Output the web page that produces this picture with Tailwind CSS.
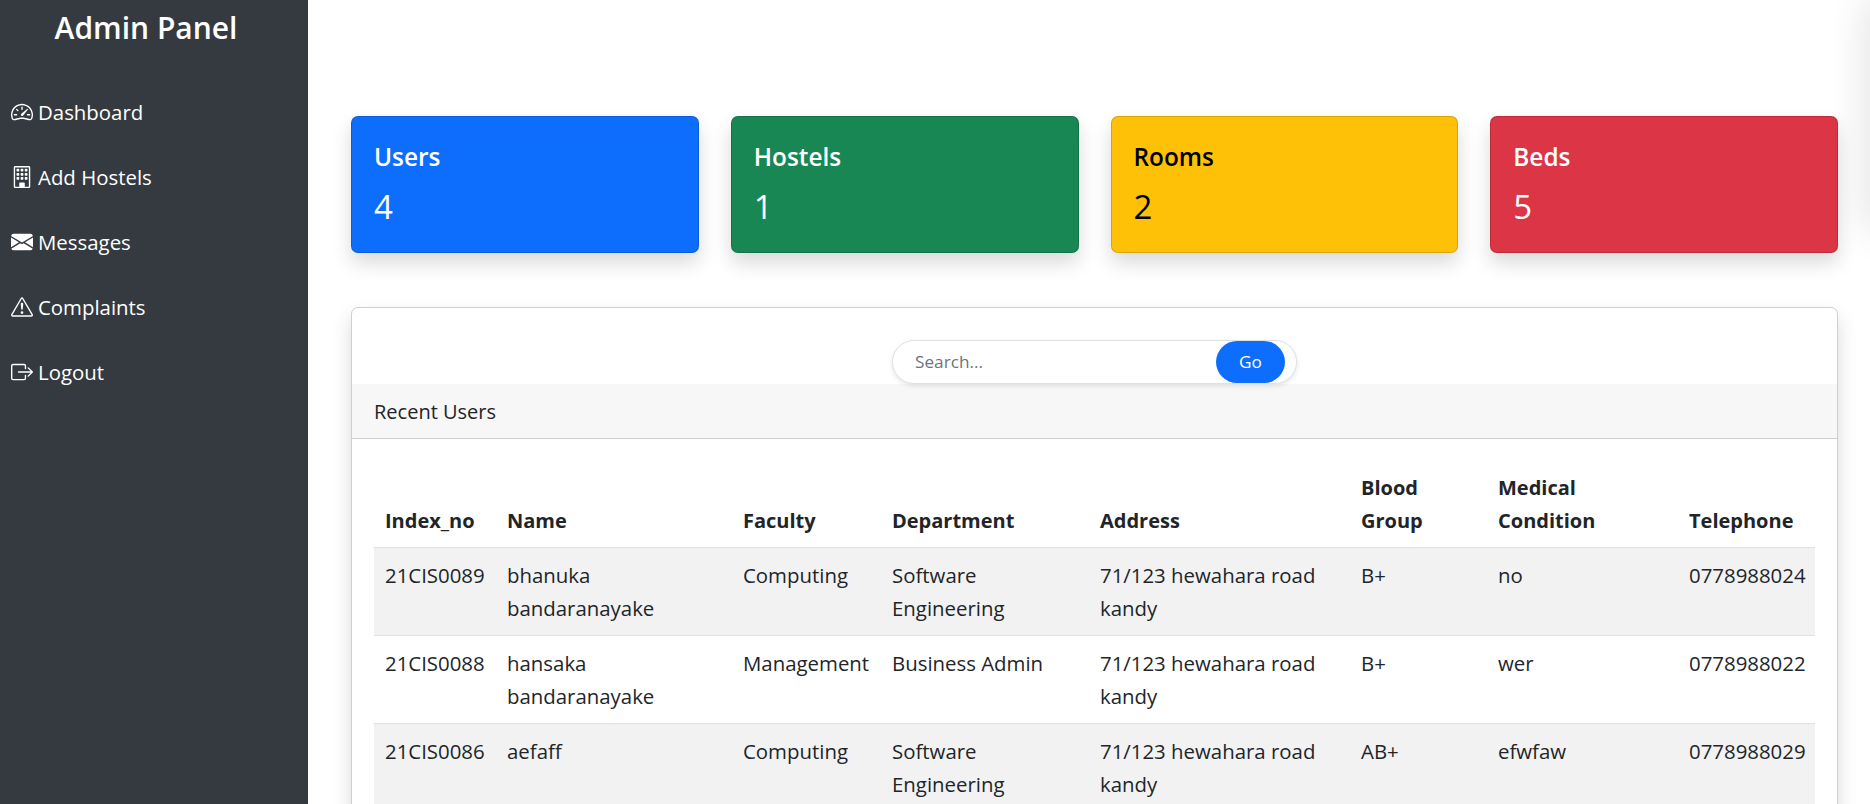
<!DOCTYPE html>
<html lang="en">
<head>
    <meta charset="UTF-8">
    <title>Admin Panel</title>
    <script src="https://cdn.jsdelivr.net/npm/@tailwindcss/browser@4"></script>
</head>
<body class="bg-white h-screen overflow-hidden flex font-['Open_Sans',sans-serif] text-[#212529] text-[20.4px] leading-[32.5px]">
    <!-- sidebar -->
    <aside class="w-[308px] h-full shrink-0 bg-[#343a40] text-white">
        <h3 class="text-center text-[30px] leading-[38px] font-semibold pt-[9px] pr-[16px] mb-[49px]">Admin Panel</h3>
        <ul class="flex flex-col gap-[33px] pl-[11px] text-[20.4px] leading-[32px]">
            <li class="flex items-center gap-[5px]">
                <svg class="w-[22px] h-[22px] shrink-0" viewBox="0 0 16 16" fill="currentColor"><path d="M8 4a.5.5 0 0 1 .5.5V6a.5.5 0 0 1-1 0V4.5A.5.5 0 0 1 8 4M3.732 5.732a.5.5 0 0 1 .707 0l.915.914a.5.5 0 1 1-.708.708l-.914-.915a.5.5 0 0 1 0-.707M2 10a.5.5 0 0 1 .5-.5h1.586a.5.5 0 0 1 0 1H2.5A.5.5 0 0 1 2 10m9.5 0a.5.5 0 0 1 .5-.5h1.5a.5.5 0 0 1 0 1H12a.5.5 0 0 1-.5-.5m.754-4.246a.39.39 0 0 0-.527-.02L7.547 9.31a.91.91 0 1 0 1.302 1.258l3.434-4.297a.39.39 0 0 0-.029-.518z"/><path fill-rule="evenodd" d="M0 10a8 8 0 1 1 15.547 2.661c-.442 1.253-1.845 1.602-2.932 1.25C11.309 13.488 9.475 13 8 13c-1.474 0-3.31.488-4.615.911-1.087.352-2.49.003-2.932-1.25A8 8 0 0 1 0 10m8-7a7 7 0 0 0-6.603 9.329c.203.575.923.876 1.68.63C4.397 12.533 6.358 12 8 12s3.604.532 4.923.96c.757.245 1.477-.056 1.68-.631A7 7 0 0 0 8 3"/></svg>
                <span>Dashboard</span>
            </li>
            <li class="flex items-center gap-[5px]">
                <svg class="w-[22px] h-[22px] shrink-0" viewBox="0 0 16 16" fill="currentColor"><path d="M4 2.5a.5.5 0 0 1 .5-.5h1a.5.5 0 0 1 .5.5v1a.5.5 0 0 1-.5.5h-1a.5.5 0 0 1-.5-.5zm3 0a.5.5 0 0 1 .5-.5h1a.5.5 0 0 1 .5.5v1a.5.5 0 0 1-.5.5h-1a.5.5 0 0 1-.5-.5zm3.5-.5a.5.5 0 0 0-.5.5v1a.5.5 0 0 0 .5.5h1a.5.5 0 0 0 .5-.5v-1a.5.5 0 0 0-.5-.5zM4 5.5a.5.5 0 0 1 .5-.5h1a.5.5 0 0 1 .5.5v1a.5.5 0 0 1-.5.5h-1a.5.5 0 0 1-.5-.5zM7.5 5a.5.5 0 0 0-.5.5v1a.5.5 0 0 0 .5.5h1a.5.5 0 0 0 .5-.5v-1a.5.5 0 0 0-.5-.5zm2.5.5a.5.5 0 0 1 .5-.5h1a.5.5 0 0 1 .5.5v1a.5.5 0 0 1-.5.5h-1a.5.5 0 0 1-.5-.5zM4.5 8a.5.5 0 0 0-.5.5v1a.5.5 0 0 0 .5.5h1a.5.5 0 0 0 .5-.5v-1a.5.5 0 0 0-.5-.5zm2.5.5a.5.5 0 0 1 .5-.5h1a.5.5 0 0 1 .5.5v1a.5.5 0 0 1-.5.5h-1a.5.5 0 0 1-.5-.5zm3.5-.5a.5.5 0 0 0-.5.5v1a.5.5 0 0 0 .5.5h1a.5.5 0 0 0 .5-.5v-1a.5.5 0 0 0-.5-.5z"/><path d="M2 1a1 1 0 0 1 1-1h10a1 1 0 0 1 1 1v14a1 1 0 0 1-1 1H3a1 1 0 0 1-1-1zm11 0H3v14h3v-2.5a.5.5 0 0 1 .5-.5h3a.5.5 0 0 1 .5.5V15h3z"/></svg>
                <span>Add Hostels</span>
            </li>
            <li class="flex items-center gap-[5px]">
                <svg class="w-[22px] h-[22px] shrink-0" viewBox="0 0 16 16" fill="currentColor"><path d="M.05 3.555A2 2 0 0 1 2 2h12a2 2 0 0 1 1.95 1.555L8 8.414zM0 4.697v7.104l5.803-3.558zM6.761 8.83l-6.57 4.027A2 2 0 0 0 2 14h12a2 2 0 0 0 1.808-1.144l-6.57-4.027L8 9.586zm3.436-.586L16 11.801V4.697z"/></svg>
                <span>Messages</span>
            </li>
            <li class="flex items-center gap-[5px]">
                <svg class="w-[22px] h-[22px] shrink-0" viewBox="0 0 16 16" fill="currentColor"><path d="M7.938 2.016A.13.13 0 0 1 8.002 2a.13.13 0 0 1 .063.016.146.146 0 0 1 .054.057l6.857 11.667c.036.06.035.124.002.183a.163.163 0 0 1-.054.06.116.116 0 0 1-.066.017H1.146a.115.115 0 0 1-.066-.017.163.163 0 0 1-.054-.06.176.176 0 0 1 .002-.183L7.884 2.073a.147.147 0 0 1 .054-.057zm1.044-.45a1.13 1.13 0 0 0-1.96 0L.165 13.233c-.457.778.091 1.767.98 1.767h13.713c.889 0 1.438-.99.98-1.767L8.982 1.566z"/><path d="M7.002 12a1 1 0 1 1 2 0 1 1 0 0 1-2 0zM7.1 5.995a.905.905 0 1 1 1.8 0l-.35 3.507a.552.552 0 0 1-1.1 0L7.1 5.995z"/></svg>
                <span>Complaints</span>
            </li>
            <li class="flex items-center gap-[5px]">
                <svg class="w-[22px] h-[22px] shrink-0" viewBox="0 0 16 16" fill="currentColor"><path fill-rule="evenodd" d="M10 12.5a.5.5 0 0 1-.5.5h-8a.5.5 0 0 1-.5-.5v-9a.5.5 0 0 1 .5-.5h8a.5.5 0 0 1 .5.5v2a.5.5 0 0 0 1 0v-2A1.5 1.5 0 0 0 9.5 2h-8A1.5 1.5 0 0 0 0 3.5v9A1.5 1.5 0 0 0 1.5 14h8a1.5 1.5 0 0 0 1.5-1.5v-2a.5.5 0 0 0-1 0z"/><path fill-rule="evenodd" d="M15.854 8.354a.5.5 0 0 0 0-.708l-3-3a.5.5 0 0 0-.708.708L14.293 7.5H5.5a.5.5 0 0 0 0 1h8.793l-2.147 2.146a.5.5 0 0 0 .708.708z"/></svg>
                <span>Logout</span>
            </li>
        </ul>
    </aside>

    <main class="flex-1 min-w-0 pt-[116px] pl-[43px] pr-[32px]">
        <!-- stat cards -->
        <div class="grid grid-cols-4 gap-[32px]">
            <div class="h-[137px] rounded-[7px] border border-black/15 bg-[#0d6efd] text-white shadow-[0_10px_19px_rgba(0,0,0,0.15)] pl-[22px] pt-[21px]">
                <h5 class="text-[24.4px] leading-[38px] font-semibold">Users</h5>
                <p class="text-[33px] leading-[48px] mt-[7px]">4</p>
            </div>
            <div class="h-[137px] rounded-[7px] border border-black/15 bg-[#198754] text-white shadow-[0_10px_19px_rgba(0,0,0,0.15)] pl-[22px] pt-[21px]">
                <h5 class="text-[24.4px] leading-[38px] font-semibold">Hostels</h5>
                <p class="text-[33px] leading-[48px] mt-[7px]">1</p>
            </div>
            <div class="h-[137px] rounded-[7px] border border-black/15 bg-[#ffc107] text-black shadow-[0_10px_19px_rgba(0,0,0,0.15)] pl-[22px] pt-[21px]">
                <h5 class="text-[24.4px] leading-[38px] font-semibold">Rooms</h5>
                <p class="text-[33px] leading-[48px] mt-[7px]">2</p>
            </div>
            <div class="h-[137px] rounded-[7px] border border-black/15 bg-[#dc3545] text-white shadow-[0_10px_19px_rgba(0,0,0,0.15)] pl-[22px] pt-[21px]">
                <h5 class="text-[24.4px] leading-[38px] font-semibold">Beds</h5>
                <p class="text-[33px] leading-[48px] mt-[7px]">5</p>
            </div>
        </div>

        <!-- recent users -->
        <div class="mt-[54px] rounded-[7px] border border-[#cfcfcf] bg-white shadow-[0_10px_19px_rgba(0,0,0,0.15)]">
            <div class="flex justify-center pt-[32px]">
                <div class="relative z-10 flex items-center w-[405px] h-[44px] pl-[22px] pr-[11px] rounded-full bg-white border border-[#dee2e6] shadow-[0_2px_5px_rgba(0,0,0,0.1)]">
                    <span class="flex-1 text-[#6c757d] text-[17.2px]">Search...</span>
                    <button class="w-[69px] h-[42px] rounded-full bg-[#0d6efd] text-white text-[17.2px]">Go</button>
                </div>
            </div>
            <div class="h-[55px] bg-[#f7f7f7] border-b border-[#cfcfcf] pl-[22px] pt-[3px] flex items-center text-[20px]">Recent Users</div>
            <div class="px-[22px] pt-[21px]">
                <table class="table-fixed w-[1441px] border-collapse text-left">
                    <thead>
                        <tr class="border-b border-[#dee2e6] align-bottom text-[20px]">
                            <th class="w-[122px] font-bold px-[11px] pt-[12px] pb-[10px]">Index_no</th>
                            <th class="w-[236px] font-bold px-[11px] pt-[12px] pb-[10px]">Name</th>
                            <th class="w-[149px] font-bold px-[11px] pt-[12px] pb-[10px]">Faculty</th>
                            <th class="w-[208px] font-bold px-[11px] pt-[12px] pb-[10px]">Department</th>
                            <th class="w-[261px] font-bold px-[11px] pt-[12px] pb-[10px]">Address</th>
                            <th class="w-[137px] font-bold px-[11px] pt-[12px] pb-[10px]">Blood Group</th>
                            <th class="w-[191px] font-bold px-[11px] pt-[12px] pb-[10px]">Medical Condition</th>
                            <th class="w-[137px] font-bold px-[11px] pt-[12px] pb-[10px]">Telephone</th>
                        </tr>
                    </thead>
                    <tbody class="align-top">
                        <tr class="bg-[#f2f2f2] border-b border-[#dee2e6]">
                            <td class="px-[11px] py-[11px]">21CIS0089</td>
                            <td class="px-[11px] py-[11px]">bhanuka bandaranayake</td>
                            <td class="px-[11px] py-[11px]">Computing</td>
                            <td class="px-[11px] py-[11px]">Software Engineering</td>
                            <td class="px-[11px] py-[11px]">71/123 hewahara road kandy</td>
                            <td class="px-[11px] py-[11px]">B+</td>
                            <td class="px-[11px] py-[11px]">no</td>
                            <td class="px-[11px] py-[11px]">0778988024</td>
                        </tr>
                        <tr class="border-b border-[#dee2e6]">
                            <td class="px-[11px] py-[11px]">21CIS0088</td>
                            <td class="px-[11px] py-[11px]">hansaka bandaranayake</td>
                            <td class="px-[11px] py-[11px]">Management</td>
                            <td class="px-[11px] py-[11px]">Business Admin</td>
                            <td class="px-[11px] py-[11px]">71/123 hewahara road kandy</td>
                            <td class="px-[11px] py-[11px]">B+</td>
                            <td class="px-[11px] py-[11px]">wer</td>
                            <td class="px-[11px] py-[11px]">0778988022</td>
                        </tr>
                        <tr class="bg-[#f2f2f2] border-b border-[#dee2e6]">
                            <td class="px-[11px] py-[11px]">21CIS0086</td>
                            <td class="px-[11px] py-[11px]">aefaff</td>
                            <td class="px-[11px] py-[11px]">Computing</td>
                            <td class="px-[11px] py-[11px]">Software Engineering</td>
                            <td class="px-[11px] py-[11px]">71/123 hewahara road kandy</td>
                            <td class="px-[11px] py-[11px]">AB+</td>
                            <td class="px-[11px] py-[11px]">efwfaw</td>
                            <td class="px-[11px] py-[11px]">0778988029</td>
                        </tr>
                    </tbody>
                </table>
            </div>
            <div class="h-[80px]"></div>
        </div>
    </main>

    <!-- off-screen panel, only its shadow reaches the right edge -->
    <div class="absolute top-0 left-[1872px] w-[20px] h-[230px] bg-white shadow-[0_0_40px_rgba(0,0,0,0.2)]"></div>
</body>
</html>
